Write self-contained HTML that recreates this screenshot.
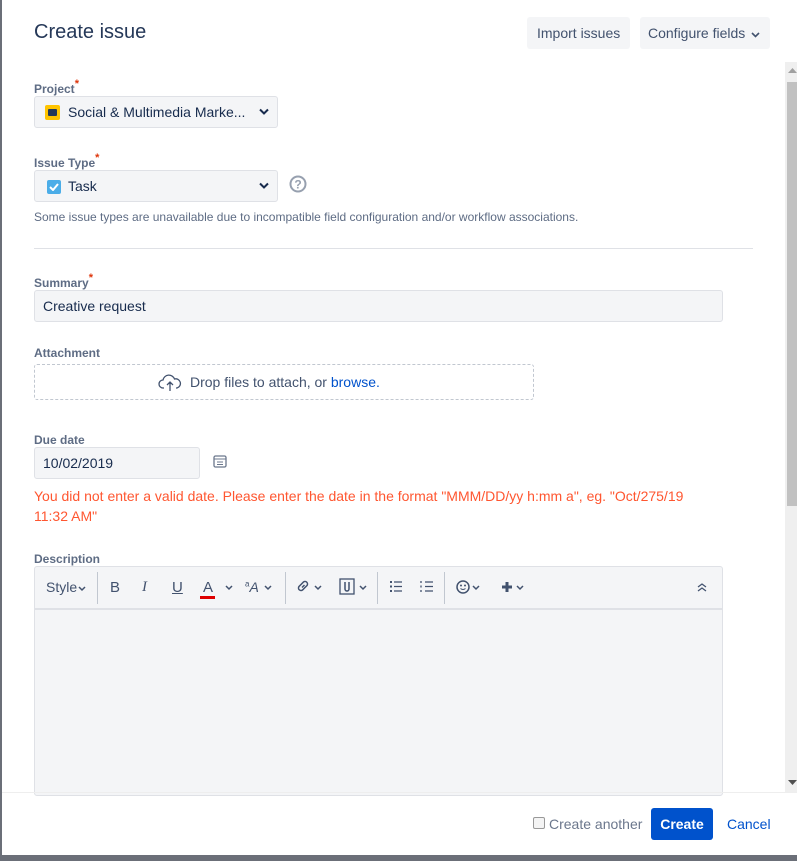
<!DOCTYPE html>
<html><head><style>
*{box-sizing:border-box}
body{margin:0;width:797px;height:861px;overflow:hidden;background:#6b6f78;font-family:"Liberation Sans",Arial,sans-serif;color:#172b4d;position:relative}
.dlg{position:absolute;left:2px;top:0;width:795px;height:855px;background:#fff}
.abs{position:absolute;white-space:nowrap}
.lbl{position:absolute;left:32px;font-size:12px;font-weight:bold;color:#5e6c84}
.req{color:#de350b;font-size:11px;vertical-align:top;position:relative;top:-4px}
.sel{position:absolute;left:32px;width:244px;height:32px;background:#f4f5f7;border:1px solid #dfe1e6;border-radius:3px;font-size:14px;line-height:30px;padding-left:33px}
.chev{position:absolute;right:8px;top:11px}
.btn{position:absolute;top:17px;height:32px;background:#f4f5f7;border-radius:3px;font-size:14px;line-height:32px;color:#42526e;padding:0 10px;white-space:nowrap}
.tb{position:absolute;top:579px;font-size:15px;color:#42526e;white-space:nowrap}
</style></head><body>
<div class="dlg">
<div class="abs" style="left:32px;top:21px;font-size:20px;color:#253858">Create issue</div>
<div class="btn" style="left:525px">Import issues</div>
<div class="btn" style="left:638px;width:130px;padding:0 8px">Configure fields <svg width="9" height="6" style="margin-left:2px"><path d="M1 1l3.5 3.5L8 1" stroke="#42526e" stroke-width="1.6" fill="none"/></svg></div>

<div class="lbl" style="top:82px">Project<span class="req">*</span></div>
<div class="sel" style="top:96px"><span class="abs" style="left:10px;top:8px;width:15px;height:15px;background:#ffc400;border-radius:2px"><span class="abs" style="left:3px;top:4px;width:9px;height:7px;background:#253858;border-radius:1px"></span></span>Social &amp; Multimedia Marke...<svg class="chev" width="10" height="8"><path d="M1 1.5l4 4 4-4" stroke="#172b4d" stroke-width="2" fill="none"/></svg></div>

<div class="lbl" style="top:156px">Issue Type<span class="req">*</span></div>
<div class="sel" style="top:170px"><span class="abs" style="left:12px;top:9px;width:14px;height:14px;background:#4bade8;border-radius:2px"><svg class="abs" style="left:2px;top:3px" width="10" height="8"><path d="M1 4l3 3 5-6" stroke="#fff" stroke-width="2" fill="none"/></svg></span>Task<svg class="chev" width="10" height="8"><path d="M1 1.5l4 4 4-4" stroke="#172b4d" stroke-width="2" fill="none"/></svg></div>
<svg class="abs" style="left:287px;top:175px" width="18" height="18"><circle cx="9" cy="9" r="7.5" stroke="#97a0af" stroke-width="2" fill="none"/><text x="9" y="13.5" font-size="12" font-weight="bold" text-anchor="middle" fill="#97a0af" font-family="Liberation Sans">?</text></svg>
<div class="abs" style="left:32px;top:210px;font-size:12px;color:#5e6c84">Some issue types are unavailable due to incompatible field configuration and/or workflow associations.</div>
<div class="abs" style="left:32px;top:248px;width:719px;height:1px;background:#dfe1e6"></div>

<div class="lbl" style="top:276px">Summary<span class="req">*</span></div>
<div class="abs" style="left:32px;top:290px;width:689px;height:32px;background:#f4f5f7;border:1px solid #dfe1e6;border-radius:3px;font-size:14px;line-height:30px;padding-left:8px">Creative request</div>

<div class="lbl" style="top:346px">Attachment</div>
<div class="abs" style="left:32px;top:364px;width:500px;height:36px;border:1px dashed #c1c7d0;border-radius:3px"></div>
<svg class="abs" style="left:156px;top:372px" width="24" height="20"><path d="M6 16H5a4 4 0 010-8 6 6 0 0111.5-1A4.5 4.5 0 0119 16h-1M12 19V10M9 13l3-3 3 3" stroke="#42526e" stroke-width="1.3" fill="none"/></svg>
<div class="abs" style="left:188px;top:374px;font-size:14px;color:#42526e">Drop files to attach, or <span style="color:#0052cc">browse.</span></div>

<div class="lbl" style="top:433px">Due date</div>
<div class="abs" style="left:32px;top:447px;width:166px;height:32px;background:#f4f5f7;border:1px solid #dfe1e6;border-radius:3px;font-size:14px;line-height:30px;padding-left:8px">10/02/2019</div>
<svg class="abs" style="left:211px;top:454px" width="15" height="14"><rect x="1" y="2" width="12" height="11" rx="1.5" stroke="#6b778c" stroke-width="1.3" fill="none"/><path d="M1 5h12M4 8h6M4 10.5h6" stroke="#6b778c" stroke-width="1"/></svg>
<div class="abs" style="left:32px;top:486px;width:680px;font-size:14px;line-height:20px;color:#ff5630;white-space:normal">You did not enter a valid date. Please enter the date in the format "MMM/DD/yy h:mm a", eg. "Oct/275/19 11:32 AM"</div>

<div class="lbl" style="top:552px">Description</div>
<div class="abs" style="left:32px;top:566px;width:689px;height:230px;background:#f4f5f7;border:1px solid #dfe1e6;border-radius:3px"></div>
<div class="abs" style="left:33px;top:608px;width:687px;height:2px;background:#dfe1e6"></div>
<div class="tb" style="left:44px;font-size:14px">Style<svg width="8" height="6" style="margin-left:1px"><path d="M1 1l3 3 3-3" stroke="#42526e" stroke-width="1.5" fill="none"/></svg></div>
<div class="abs" style="left:95px;top:572px;width:1px;height:32px;background:#c1c7d0"></div>
<div class="tb" style="left:108px">B</div>
<div class="tb" style="left:140px;font-style:italic;font-family:'Liberation Serif',serif">I</div>
<div class="tb" style="left:170px;text-decoration:underline">U</div>
<div class="tb" style="left:201px">A</div><div class="abs" style="left:198px;top:596px;width:15px;height:3px;background:#de0000"></div>
<svg class="abs" style="left:223px;top:585px" width="8" height="6"><path d="M1 1l3 3 3-3" stroke="#42526e" stroke-width="1.5" fill="none"/></svg>
<div class="tb" style="left:243px;font-size:14px"><sup style="font-size:8px">a</sup><i>A</i></div>
<svg class="abs" style="left:262px;top:585px" width="8" height="6"><path d="M1 1l3 3 3-3" stroke="#42526e" stroke-width="1.5" fill="none"/></svg>
<div class="abs" style="left:283px;top:572px;width:1px;height:32px;background:#c1c7d0"></div>
<svg class="abs" style="left:293px;top:578px" width="16" height="16"><path d="M7 9.5l2.5-2.5M6 6.5L8.5 4a2.5 2.5 0 013.5 3.5L9.5 10M10 9.5L7.5 12A2.5 2.5 0 014 8.5L6.5 6" stroke="#42526e" stroke-width="1.5" fill="none"/></svg>
<svg class="abs" style="left:312px;top:585px" width="8" height="6"><path d="M1 1l3 3 3-3" stroke="#42526e" stroke-width="1.5" fill="none"/></svg>
<svg class="abs" style="left:337px;top:578px" width="16" height="17"><rect x="1" y="1" width="14" height="15" stroke="#42526e" stroke-width="1.3" fill="none"/><path d="M6 4v7a2 2 0 004 0V4" stroke="#42526e" stroke-width="1.5" fill="none"/></svg>
<svg class="abs" style="left:357px;top:585px" width="8" height="6"><path d="M1 1l3 3 3-3" stroke="#42526e" stroke-width="1.5" fill="none"/></svg>
<div class="abs" style="left:375px;top:572px;width:1px;height:32px;background:#c1c7d0"></div>
<svg class="abs" style="left:387px;top:580px" width="14" height="13"><path d="M1 2h2M1 6.5h2M1 11h2" stroke="#42526e" stroke-width="2"/><path d="M5 2h8M5 6.5h8M5 11h8" stroke="#42526e" stroke-width="1.3"/></svg>
<svg class="abs" style="left:418px;top:580px" width="14" height="13"><path d="M1 1v2M1 5.5v2M1 10v2" stroke="#42526e" stroke-width="1.3"/><path d="M5 2h8M5 6.5h8M5 11h8" stroke="#42526e" stroke-width="1.3"/></svg>
<div class="abs" style="left:442px;top:572px;width:1px;height:32px;background:#c1c7d0"></div>
<svg class="abs" style="left:454px;top:580px" width="14" height="14"><circle cx="7" cy="7" r="6" stroke="#42526e" stroke-width="1.5" fill="none"/><path d="M4.5 8.5q2.5 2 5 0" stroke="#42526e" fill="none"/><circle cx="5" cy="5.5" r="1" fill="#42526e"/><circle cx="9" cy="5.5" r="1" fill="#42526e"/></svg>
<svg class="abs" style="left:470px;top:585px" width="8" height="6"><path d="M1 1l3 3 3-3" stroke="#42526e" stroke-width="1.5" fill="none"/></svg>
<svg class="abs" style="left:499px;top:581px" width="12" height="12"><path d="M6 1v10M1 6h10" stroke="#42526e" stroke-width="3"/></svg>
<svg class="abs" style="left:514px;top:585px" width="8" height="6"><path d="M1 1l3 3 3-3" stroke="#42526e" stroke-width="1.5" fill="none"/></svg>
<svg class="abs" style="left:695px;top:582px" width="10" height="10"><path d="M1 5l4-3 4 3M1 9l4-3 4 3" stroke="#42526e" stroke-width="1.3" fill="none"/></svg>

<div class="abs" style="left:783px;top:62px;width:12px;height:730px;background:#efefef"></div>
<div class="abs" style="left:785px;top:82px;width:10px;height:424px;background:#c1c1c1"></div>
<svg class="abs" style="left:786px;top:68px" width="9" height="6"><path d="M0 5l4.5-5 4.5 5z" fill="#a0a0a0"/></svg>
<svg class="abs" style="left:786px;top:780px" width="9" height="6"><path d="M0 0l4.5 5 4.5-5z" fill="#505050"/></svg>
<div class="abs" style="left:0;top:792px;width:795px;height:1px;background:#eee"></div>

<div class="abs" style="left:531px;top:817px;width:12px;height:12px;border:1px solid #999;border-radius:2px;background:#f4f4f4"></div>
<div class="abs" style="left:547px;top:816px;font-size:14px;color:#6b778c">Create another</div>
<div class="abs" style="left:649px;top:808px;width:62px;height:32px;background:#0052cc;border-radius:3px;color:#fff;font-weight:bold;font-size:14px;line-height:32px;text-align:center">Create</div>
<div class="abs" style="left:725px;top:816px;font-size:14px;color:#0052cc">Cancel</div>
</div>
</body></html>
